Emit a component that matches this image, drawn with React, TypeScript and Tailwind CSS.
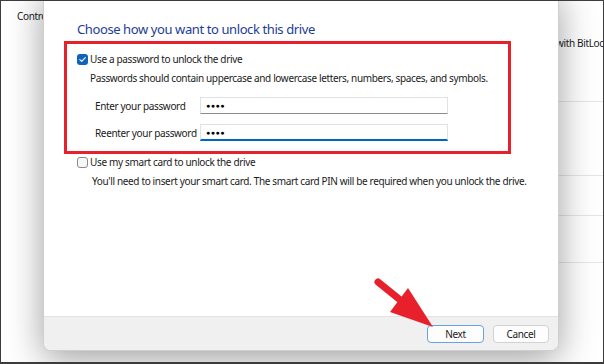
import React from "react";

const font = { fontFamily: '"Noto Sans", "Open Sans", sans-serif' };

function CheckBox({ checked }: { checked: boolean }) {
  if (checked) {
    return (
      <div className="w-[11px] h-[11px] rounded-[3px] bg-[#0f62be] flex items-center justify-center shrink-0">
        <svg width="9" height="9" viewBox="0 0 9 9">
          <path d="M1.8 4.6 L3.7 6.4 L7.3 2.6" fill="none" stroke="#fff" strokeWidth="1.1" strokeLinecap="round" strokeLinejoin="round" />
        </svg>
      </div>
    );
  }
  return <div className="w-[11px] h-[11px] rounded-[3px] border border-[#8a8a8a] bg-[#f7f7f7] shrink-0" />;
}

function PwdInput({ focused }: { focused?: boolean }) {
  return (
    <div
      className={
        "w-[248px] h-[17px] bg-white border border-[#e2e2e2] flex items-center pl-[5px] " +
        (focused ? "border-b-2 border-b-[#0067c0]" : "border-b-[#8c8c8c]")
      }
    >
      <span className="text-[7px] leading-none tracking-[0.5px] text-black">●●●●</span>
    </div>
  );
}

const body = "text-[10px] leading-[16px] tracking-[-0.35px] whitespace-nowrap";

export default function App() {
  return (
    <div
      className="relative w-[604px] h-[364px] overflow-hidden bg-white border-t border-l border-r border-b-2 border-[#3c3c3c] text-[#1a1a1a]"
      style={font}
    >
      {/* background window */}
      <div className="flex w-full h-full">
        <div className="w-[555px] pl-[16px] pt-[7px]">
          <div className={body + " text-[#222]"}>Control Panel</div>
        </div>
        <div className="flex-1 flex flex-col overflow-hidden">
          <div className={"h-[100px] pt-[34px] " + body}>with BitLocker</div>
          <div className="h-[74px] border-t border-[#e6e6e6]" />
          <div className="h-[40px] border-t border-[#e6e6e6]" />
          <div className="h-[47px] border-t border-[#e6e6e6]" />
          <div className="flex-1 border-t border-[#e6e6e6]" />
        </div>
      </div>

      {/* dialog */}
      <div className="absolute left-[42px] top-[-12px] w-[516px] h-[362px] bg-white rounded-b-[8px] border border-[#cfcfcf] shadow-[0_8px_36px_rgba(0,0,0,0.38)] flex flex-col overflow-hidden">
        <div className="flex-1 pt-[28px]">
          <div className="pl-[33px] h-[22px] leading-[22px] text-[13px] tracking-[-0.4px] whitespace-nowrap text-[#1e3c96]">
            Choose how you want to unlock this drive
          </div>
          <div className="ml-[20px] mt-[1px] w-[447px] border-[3px] border-[#e8202b] pt-[7px] pl-[10px] pb-[10px]">
            <div className="h-[16px] flex items-center gap-[2px]">
              <CheckBox checked />
              <span className={body}>Use a password to unlock the drive</span>
            </div>
            <div className={"mt-[3px] h-[16px] pl-[13px] " + body}>
              Passwords should contain uppercase and lowercase letters, numbers, spaces, and symbols.
            </div>
            <div className="mt-[11px] flex items-center pl-[18px]">
              <div className={"w-[105px] " + body}>Enter your password</div>
              <PwdInput />
            </div>
            <div className="mt-[10px] flex items-center pl-[18px]">
              <div className={"w-[105px] " + body}>Reenter your password</div>
              <PwdInput focused />
            </div>
          </div>
          <div className="ml-[33px] h-[16px] flex items-center gap-[2px]">
            <CheckBox checked={false} />
            <span className={body}>Use my smart card to unlock the drive</span>
          </div>
          <div className={"ml-[48px] mt-[3px] h-[16px] " + body}>
            You'll need to insert your smart card. The smart card PIN will be required when you unlock the drive.
          </div>
        </div>
        <div className="h-[34px] bg-[#f0f0f0] border-t border-[#e3e3e3] flex justify-end items-start pt-[8px] pr-[9px] gap-[9px]">
          <div className={"w-[57px] h-[18px] rounded-[4px] bg-[#fdfdfd] border border-[#6aa2dc] flex items-center justify-center " + body}>
            Next
          </div>
          <div className={"w-[56px] h-[18px] rounded-[4px] bg-[#fdfdfd] border border-[#d2d2d2] flex items-center justify-center " + body}>
            Cancel
          </div>
        </div>
      </div>

      {/* red annotation arrow */}
      <svg className="absolute left-0 top-0 pointer-events-none" width="604" height="364" viewBox="0 0 604 364">
        <line x1="377" y1="281" x2="403" y2="302" stroke="#e8202b" strokeWidth="7" strokeLinecap="round" />
        <polygon points="432,326 407,287 389,311" fill="#e8202b" />
      </svg>
    </div>
  );
}
